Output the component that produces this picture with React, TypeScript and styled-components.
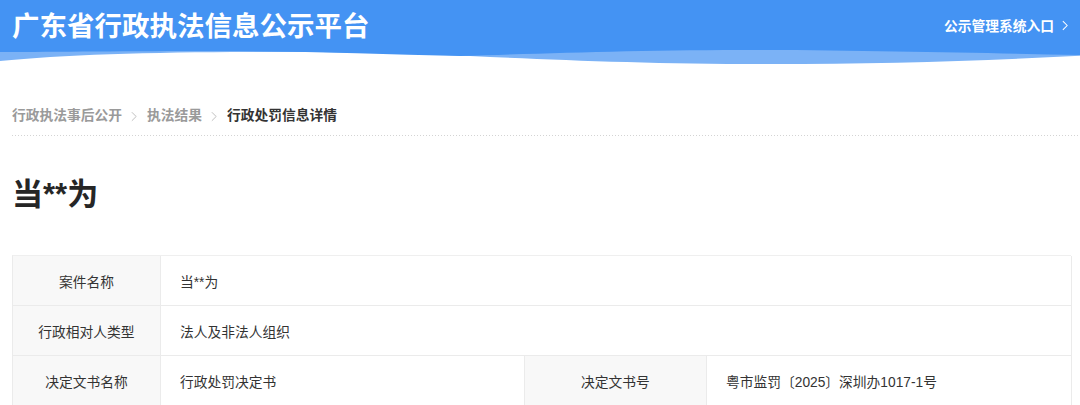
import React from 'react';
import styled, { createGlobalStyle } from 'styled-components';

const GlobalStyle = createGlobalStyle`
  html, body {
    margin: 0;
    padding: 0;
    background: #fff;
  }
  body {
    font-family: "Liberation Sans", "Noto Sans CJK SC", sans-serif;
    color: #333;
  }
`;

const Page = styled.div`
  width: 1080px;
  overflow: hidden;
`;

const TopBar = styled.header`
  height: 50px;
  background: #4493f3;
  display: flex;
  align-items: center;
  justify-content: space-between;
  padding: 0 12px;
  box-sizing: border-box;
`;

const SiteTitle = styled.h1`
  margin: 4px 0 0;
  font-size: 27.5px;
  line-height: 36px;
  font-weight: 700;
  color: #fff;
`;

const EntryLink = styled.a`
  display: flex;
  align-items: center;
  gap: 8px;
  color: #fff;
  font-size: 13.75px;
  font-weight: 700;
  text-decoration: none;
`;

const Wave = styled.svg`
  display: block;
  width: 1080px;
  height: 16px;
`;

const Main = styled.main`
  padding: 0 9px 0 12px;
`;

const Crumbs = styled.nav`
  margin-top: 40px;
  display: flex;
  align-items: center;
  height: 20px;
  font-size: 13.75px;
  line-height: 20px;
`;

const Crumb = styled.span<{ $current?: boolean }>`
  color: ${(p) => (p.$current ? '#333' : '#9a9a9a')};
  font-weight: 700;
`;

const Sep = styled.svg`
  margin: 0 10px 0 9px;
  display: block;
`;

const Dots = styled.div`
  margin: 9px -9px 0 0;
  height: 1px;
  background-image: linear-gradient(to right, #d4d4d4 34%, transparent 34%);
  background-size: 3px 1px;
`;

const Heading = styled.h2`
  margin: 39px 0 0;
  font-size: 31px;
  line-height: 40px;
  font-weight: 700;
  color: #262626;
`;

const Table = styled.div`
  margin-top: 40px;
  display: grid;
  grid-template-columns: 148px 364px 182px 365px;
  border-top: 1px solid #efefef;
  border-left: 1px solid #ebebeb;
`;

const Cell = styled.div<{ $label?: boolean; $span?: number }>`
  grid-column: span ${(p) => p.$span ?? 1};
  height: 50px;
  box-sizing: border-box;
  display: flex;
  align-items: center;
  justify-content: ${(p) => (p.$label ? 'center' : 'flex-start')};
  padding: ${(p) => (p.$label ? '0' : '0 20px 0 19px')};
  background: ${(p) => (p.$label ? '#f8f8f8' : '#fff')};
  border-right: 1px solid #ebebeb;
  border-bottom: 1px solid #ebebeb;
  font-size: 13.75px;
  color: #333;
`;

const Chevron = ({ color, w, h }: { color: string; w: number; h: number }) => (
  <svg width={w} height={h} viewBox="0 0 7 12" fill="none">
    <polyline points="1,1 6,6 1,11" stroke={color} strokeWidth="1.2" />
  </svg>
);

const rows: { label: string; value: string; label2?: string; value2?: string }[] = [
  { label: '案件名称', value: '当**为' },
  { label: '行政相对人类型', value: '法人及非法人组织' },
  {
    label: '决定文书名称',
    value: '行政处罚决定书',
    label2: '决定文书号',
    value2: '粤市监罚〔2025〕深圳办1017-1号',
  },
];

export default function App() {
  return (
    <Page>
      <GlobalStyle />
      <TopBar>
        <SiteTitle>广东省行政执法信息公示平台</SiteTitle>
        <EntryLink href="#">
          公示管理系统入口
          <Chevron color="#fff" w={6} h={11} />
        </EntryLink>
      </TopBar>
      <Wave viewBox="0 0 1080 16" preserveAspectRatio="none">
        <path
          d="M0,0 H1080 V5.7 C980,11 880,14 770,14 C650,14 560,10 470,6 C380,2 300,2 250,2 C150,2 60,5 0,11 Z"
          fill="#7bb2f6"
        />
        <path
          d="M0,0 H1080 V5 C980,3 880,0.5 760,0 C640,0 560,3 460,6 C380,4 300,1 220,1 C120,1 60,2 0,2 Z"
          fill="#4493f3"
        />
      </Wave>
      <Main>
        <Crumbs>
          <Crumb>行政执法事后公开</Crumb>
          <Sep width="6" height="11" viewBox="0 0 7 12" fill="none">
            <polyline points="1,1 6,6 1,11" stroke="#bcbcbc" strokeWidth="1.1" />
          </Sep>
          <Crumb>执法结果</Crumb>
          <Sep width="6" height="11" viewBox="0 0 7 12" fill="none">
            <polyline points="1,1 6,6 1,11" stroke="#bcbcbc" strokeWidth="1.1" />
          </Sep>
          <Crumb $current>行政处罚信息详情</Crumb>
        </Crumbs>
        <Dots />
        <Heading>当**为</Heading>
        <Table>
          {rows.map((r) =>
            r.label2 ? (
              <React.Fragment key={r.label}>
                <Cell $label>{r.label}</Cell>
                <Cell>{r.value}</Cell>
                <Cell $label>{r.label2}</Cell>
                <Cell>{r.value2}</Cell>
              </React.Fragment>
            ) : (
              <React.Fragment key={r.label}>
                <Cell $label>{r.label}</Cell>
                <Cell $span={3}>{r.value}</Cell>
              </React.Fragment>
            )
          )}
        </Table>
      </Main>
    </Page>
  );
}
